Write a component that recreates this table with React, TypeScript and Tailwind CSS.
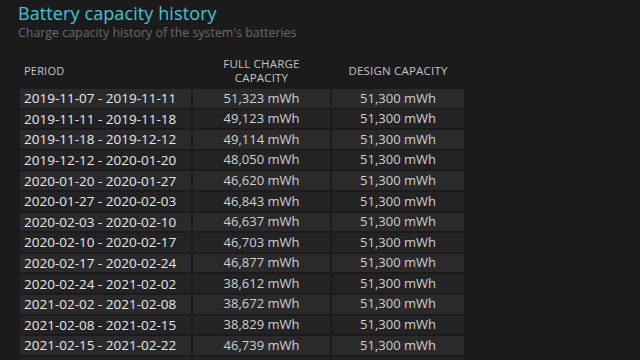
import React from "react";

const rows: [string, string][] = [
  ["2019-11-07 - 2019-11-11", "51,323 mWh"],
  ["2019-11-11 - 2019-11-18", "49,123 mWh"],
  ["2019-11-18 - 2019-12-12", "49,114 mWh"],
  ["2019-12-12 - 2020-01-20", "48,050 mWh"],
  ["2020-01-20 - 2020-01-27", "46,620 mWh"],
  ["2020-01-27 - 2020-02-03", "46,843 mWh"],
  ["2020-02-03 - 2020-02-10", "46,637 mWh"],
  ["2020-02-10 - 2020-02-17", "46,703 mWh"],
  ["2020-02-17 - 2020-02-24", "46,877 mWh"],
  ["2020-02-24 - 2021-02-02", "38,612 mWh"],
  ["2021-02-02 - 2021-02-08", "38,672 mWh"],
  ["2021-02-08 - 2021-02-15", "38,829 mWh"],
  ["2021-02-15 - 2021-02-22", "46,739 mWh"],
  ["2021-02-22 - 2021-03-01", "46,702 mWh"],
];

export default function App() {
  return (
    <div
      className="w-[640px] h-[360px] overflow-hidden bg-[#1b1b1b] pl-[18px] pt-[1px]"
      style={{ fontFamily: '"Open Sans", "Noto Sans", sans-serif' }}
    >
      <h1 className="text-[18px] leading-[25px] text-[#3cc6d2] tracking-[0.1px]">
        Battery capacity history
      </h1>
      <p className="text-[12.4px] leading-[14px] text-[#6a6a6a]">
        Charge capacity history of the system's batteries
      </p>
      <div className="mt-[15px] ml-[2px] grid grid-cols-[171px_137px_132px] gap-x-[2px] gap-y-[2px] w-[444px]">
        <div className="h-[32px] flex items-center pl-[4px] text-[11px] text-[#c4c4c4] tracking-[0.2px]">
          PERIOD
        </div>
        <div className="h-[32px] flex items-center justify-center text-center text-[11.5px] leading-[14px] text-[#c4c4c4] tracking-[0.2px]">
          FULL CHARGE
          <br />
          CAPACITY
        </div>
        <div className="h-[32px] flex items-center justify-center text-[11.5px] text-[#c4c4c4] tracking-[0.2px]">
          DESIGN CAPACITY
        </div>
        {rows.map(([p, f], i) => {
          const bg = i % 2 === 0 ? "bg-[#2a2a2a]" : "bg-[#232323]";
          return (
            <React.Fragment key={p}>
              <div
                className={`${bg} h-[18.6px] flex items-center pl-[4px] text-[13.5px] text-[#e8e8e8] whitespace-nowrap`}
              >
                {p}
              </div>
              <div
                className={`${bg} h-[18.6px] flex items-center justify-center text-[13px] text-[#d0d0d0] whitespace-nowrap`}
              >
                {f}
              </div>
              <div
                className={`${bg} h-[18.6px] flex items-center justify-center text-[13px] text-[#d0d0d0] whitespace-nowrap`}
              >
                51,300 mWh
              </div>
            </React.Fragment>
          );
        })}
      </div>
    </div>
  );
}
